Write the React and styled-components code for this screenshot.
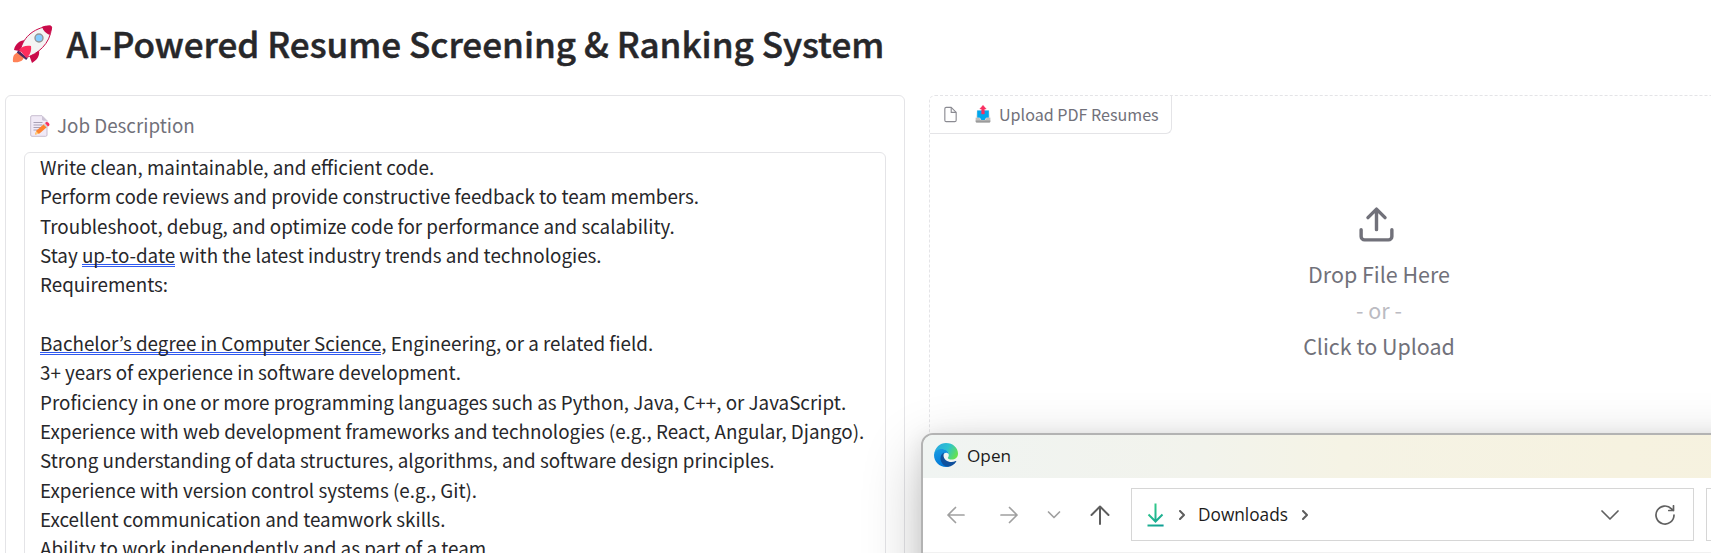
import React from "react";
import styled, { createGlobalStyle } from "styled-components";

const Global = createGlobalStyle`
  * { box-sizing: border-box; }
  html, body { margin: 0; background: #fff; overflow: hidden; }
  body { font-family: "Noto Sans CJK KR", "Noto Sans", sans-serif; color: #27272a; }
  svg { display: block; flex: none; }
`;

const Page = styled.main`
  position: relative;
  width: 1711px;
  height: 553px;
  overflow: hidden;
  padding-left: 5px;
`;
const Header = styled.h1`
  margin: 0;
  height: 95px;
  padding: 0 0 6px 6px;
  display: flex;
  align-items: center;
  gap: 13.5px;
  font-size: 35.05px;
  font-weight: 500;
  line-height: 56px;
  white-space: nowrap;
`;
const Title = styled.span`
  padding-bottom: 3px;
  -webkit-text-stroke: 0.5px #27272a;
`;
const Columns = styled.div`
  display: grid;
  grid-template-columns: 900px 900px;
  gap: 24px;
  height: 600px;
`;
const Panel = styled.section`
  border: 1px ${(p) => (p.$dashed ? "dashed" : "solid")} #e4e4e7;
  border-radius: 6px;
  min-width: 0;
`;
const JobPanel = styled(Panel)`
  display: flex;
  flex-direction: column;
  padding: 18px 18px 0;
`;
const FieldLabel = styled.div`
  display: flex;
  align-items: center;
  gap: 7px;
  height: 38px;
  padding: 0 0 15px 6px;
  font-size: 18.8px;
  line-height: 26px;
  color: #71717a;
`;
const LabelText = styled.span`
  padding-bottom: 2px;
`;
const TextField = styled.div`
  flex: 1;
  border: 1px solid #e4e4e7;
  border-radius: 6px;
  padding: 0 15px;
  font-size: 18.81px;
  line-height: 29.35px;
  white-space: pre;
`;
const Lines = styled.div`
  margin-top: -1px;
`;
const Line = styled.div`
  height: 29.35px;
`;
const Checked = styled.span`
  display: inline-block;
  height: 29.35px;
  vertical-align: top;
  background: linear-gradient(#2f59f0 1px, transparent 1px 2px, #2f59f0 2px 3px) 0 24px / 100% 3px no-repeat;
`;
const UploadTag = styled.div`
  display: flex;
  align-items: center;
  width: 242px;
  height: 38px;
  padding: 0 0 1px 12px;
  border: solid #e4e4e7;
  border-width: 0 1px 1px 0;
  border-radius: 0 0 6px 0;
  font-size: 16.1px;
  line-height: 24px;
  color: #71717a;
  white-space: nowrap;
`;
const TagEmoji = styled.span`
  margin: 0 8px 0 16px;
`;
const DropArea = styled.div`
  display: flex;
  flex-direction: column;
  align-items: center;
  padding-top: 70px;
  font-size: 21.45px;
  line-height: 36px;
  color: #71717a;
`;
const UploadMark = styled.div`
  margin: 0 6px 11px 0;
`;
const Or = styled.span`
  color: #bbbbc2;
`;
const Dialog = styled.div`
  position: absolute;
  left: 921px;
  top: 433px;
  width: 1000px;
  height: 400px;
  border: 2px solid #b3b3b3;
  border-radius: 12px;
  background: #fff;
  overflow: hidden;
  color: #1b1b1b;
  font-family: "Open Sans", "Noto Sans", sans-serif;
  box-shadow: 0 20px 60px rgba(0, 0, 0, 0.24), 0 2px 20px rgba(0, 0, 0, 0.08);
`;
const TitleBar = styled.div`
  display: flex;
  align-items: center;
  gap: 9px;
  height: 43px;
  padding: 0 0 3px 11px;
  font-size: 17.2px;
  background: linear-gradient(90deg, #f0f4f2 0, #f2f3ec 280px, #f5f3e5 420px, #f6f2e0 700px, #f6f1de 100%);
`;
const Toolbar = styled.div`
  display: flex;
  align-items: center;
  height: 75px;
  padding: 0 0 1px 23px;
  border-bottom: 1px solid #f1f1f1;
`;
const NavButtons = styled.div`
  display: flex;
  align-items: center;
  width: 185px;
`;
const NavButton = styled.span`
  color: ${(p) => (p.$active ? "#5d5d5d" : "#a0a0a0")};
  margin-right: ${(p) => p.$gap || 0}px;
`;
const AddressBar = styled.div`
  display: flex;
  align-items: center;
  width: 563px;
  height: 53px;
  padding: 0 18px 0 15px;
  border: 1px solid #d6d6d6;
  font-size: 17.25px;
  color: #1b1b1b;
`;
const CrumbArrow = styled.span`
  margin-left: ${(p) => (p.$first ? 15 : 0)}px;
  color: #5d5d5d;
`;
const Crumb = styled.span`
  margin: 0 14px 0 13px;
  padding-bottom: 1px;
`;
const BarActions = styled.div`
  display: flex;
  align-items: center;
  gap: 36px;
  margin-left: auto;
  color: #606060;
`;
const SearchBox = styled.div`
  width: 200px;
  height: 53px;
  margin-left: 12px;
  border: 1px solid #d6d6d6;
`;

const Rocket = () => (
  <svg width="42" height="42" viewBox="0 0 42 42">
    <path d="M3 31c3-4 10-3 10 1 0 5-5 7-11 6-.4-3 0-5 1-7z" fill="#ff8257" />
    <path d="M15 16c-6 0-11 4-12 10l10 2zM28 26c1 6-2 10-7 13l-4-11z" fill="#ca0b4a" />
    <path d="M9 28c2-13 12-24 30-26 1 0 2 1 1.500 2C39 20 27 30 14 34z" fill="#f4f4f4" stroke="#ca0b4a" />
    <path d="M31 2.800c3-1 6-1.500 8.500-1 1.600.4 1.500 2 1 4L38.500 11C35 9.500 32 6.500 31 2.800z" fill="#ca0b4a" />
    <path d="M6.500 27.500 16 35" stroke="#4c2a63" strokeWidth="2.500" />
    <path d="M8 25.500c3-3 7-4.500 12-3.500.7 5-1 9-4.500 12z" fill="#fc2d5d" />
    <circle cx="28" cy="14" r="4" fill="#83cbff" stroke="#949494" strokeWidth="1.400" />
  </svg>
);
const Memo = () => (
  <svg width="20" height="22" viewBox="0 0 20 22">
    <path d="M2 .7h10l5 5V20q0 1.300-1.300 1.300H2Q.7 21.300.7 20V2Q.7.7 2 .7z" fill="#f1eaf7" stroke="#c8bed0" />
    <path d="M12 .7v3.600Q12 5.700 13.500 5.700H17z" fill="#cdc4d6" />
    <path d="M3.500 7.500h9M3.500 10h9M3.500 12.500h9M3.500 15h5" stroke="#a9a1b5" />
    <path d="m5 19.500 1.500-4L14 9l3 3-7.500 6.500z" fill="#ff822d" />
    <path d="m5 19.700 1.200-3.500 2.500 2.500z" fill="#ffce7c" />
    <path d="m13.500 9.500 1.500-1.300 3 3-1.400 1.300z" fill="#d3d3d3" />
    <path d="m15 8 1-.8c1.500-1 4.500 1.800 3.200 3.200l-1.200 1z" fill="#f92f60" />
  </svg>
);
const Outbox = () => (
  <svg width="16" height="18" viewBox="0 0 16 18">
    <path d="M2 5h12l1.300 8v3H.7v-3z" fill="#e6e6e6" />
    <path d="M2.200 5.500h11.600v7.300H11L9.700 15H6.300L5 12.800H2.200z" fill="#00a6ed" />
    <path d="M.7 12.800h3.500L6 15.200h4l1.800-2.400h3.500v3.700q0 1-1 1H1.700q-1 0-1-1z" fill="#bebebe" />
    <path d="M.7 15.500h14.600v1q0 1-1 1H1.700q-1 0-1-1z" fill="#9b9b9b" />
    <path d="M8 .3 11.200 4H9.400v5H6.600V4H4.800z" fill="#f92f60" stroke="#f92f60" strokeWidth=".4" />
  </svg>
);
const FileIcon = () => (
  <svg width="17" height="17" viewBox="0 0 24 24" fill="none" stroke="#8b8b92" strokeWidth="1.600" strokeLinejoin="round">
    <path d="M13 2H6a2 2 0 0 0-2 2v16a2 2 0 0 0 2 2h12a2 2 0 0 0 2-2V9z" />
    <path d="M13 2v7h7" />
  </svg>
);
const UploadIcon = () => (
  <svg width="41" height="41" viewBox="0 0 24 24" fill="none" stroke="#71717a" strokeWidth="2" strokeLinecap="round" strokeLinejoin="round">
    <path d="M21 15v4a2 2 0 0 1-2 2H5a2 2 0 0 1-2-2v-4M17 8l-5-5-5 5M12 3v12" />
  </svg>
);
const EdgeLogo = () => (
  <svg width="24" height="24" viewBox="0 0 24 24">
    <defs>
      <linearGradient id="edgeTop" x1="0" y1="0.300" x2="1" y2="0.700">
        <stop offset="0" stopColor="#2aa9df" />
        <stop offset=".5" stopColor="#2cc3cf" />
        <stop offset="1" stopColor="#6be346" />
      </linearGradient>
      <linearGradient id="edgeLeft" x1="0" y1="0" x2="0.400" y2="1">
        <stop offset="0" stopColor="#1b9de2" />
        <stop offset="1" stopColor="#0078d8" />
      </linearGradient>
    </defs>
    <path d="M.2 11C1 4.500 6 0 12 0c7 0 12 5 12 10.500 0 4-3 6-6.300 6-2.500 0-3.900-.8-3.900-1.600 0-.7 1-1.200 1-3C14.800 8.500 11 6.500 8 6.500 4 6.500 1 9 .2 11z" fill="url(#edgeTop)" />
    <path d="M0 12c.2-3.700 3.500-6 7.500-6 4.200 0 7.300 2.700 7.300 5.500-.5-1.200-1.500-1.700-2.700-1.700-2.300 0-3.800 2.200-3.800 4.700 0 5 4.300 7.500 7.700 8.500-1.200.7-2.700 1-4 1C5.400 24 0 18.600 0 12z" fill="url(#edgeLeft)" />
    <path d="M10 9.600c-2.200 1-3.500 3.200-3.500 5.700 0 4.400 3.700 8.500 7.500 8.500 3.600-.5 6.700-2.600 8.300-5.300.3-.5-.1-.8-.6-.5-1.300.7-2.800 1-4.200 1-4.200 0-8-2.700-8-6.500 0-1.100.3-2.100.5-2.900z" fill="#0f509c" />
  </svg>
);
const Stroke = ({ w, h, d, sw = 1.7 }) => (
  <svg width={w} height={h} viewBox={`0 0 ${w} ${h}`} fill="none" stroke="currentColor" strokeWidth={sw} strokeLinecap="round" strokeLinejoin="round">
    <path d={d} />
  </svg>
);
const DownloadIcon = () => (
  <svg width="17" height="24" viewBox="0 0 17 24" fill="none" strokeWidth="2">
    <defs>
      <linearGradient id="down" x1="0" y1="0" x2="17" y2="24" gradientUnits="userSpaceOnUse">
        <stop offset="0" stopColor="#3bd487" />
        <stop offset="1" stopColor="#0b9b96" />
      </linearGradient>
    </defs>
    <path d="M8.500.5v17.500M1.500 11.500l7 7 7-7M.5 22.500h16.100" stroke="url(#down)" />
  </svg>
);

const jobLines = [
  { text: "Write clean, maintainable, and efficient code." },
  { text: "Perform code reviews and provide constructive feedback to team members." },
  { text: "Troubleshoot, debug, and optimize code for performance and scalability." },
  { lead: "Stay ", flagged: "up-to-date", text: " with the latest industry trends and technologies." },
  { text: "Requirements:" },
  { text: "" },
  { flagged: "Bachelor’s degree in Computer Science", text: ", Engineering, or a related field." },
  { text: "3+ years of experience in software development." },
  { text: "Proficiency in one or more programming languages such as Python, Java, C++, or JavaScript." },
  { text: "Experience with web development frameworks and technologies (e.g., React, Angular, Django)." },
  { text: "Strong understanding of data structures, algorithms, and software design principles." },
  { text: "Experience with version control systems (e.g., Git)." },
  { text: "Excellent communication and teamwork skills." },
  { text: "Ability to work independently and as part of a team." },
];

export default function App() {
  return (
    <Page>
      <Global />
      <Header>
        <Rocket />
        <Title>AI-Powered Resume Screening &amp; Ranking System</Title>
      </Header>
      <Columns>
        <JobPanel>
          <FieldLabel>
            <Memo />
            <LabelText>Job Description</LabelText>
          </FieldLabel>
          <TextField>
            <Lines>
              {jobLines.map(({ lead, flagged, text }, i) => (
                <Line key={i}>
                  {lead}
                  {flagged && <Checked>{flagged}</Checked>}
                  {text}
                </Line>
              ))}
            </Lines>
          </TextField>
        </JobPanel>
        <Panel $dashed>
          <UploadTag>
            <FileIcon />
            <TagEmoji><Outbox /></TagEmoji>
            <span>Upload PDF Resumes</span>
          </UploadTag>
          <DropArea>
            <UploadMark><UploadIcon /></UploadMark>
            <span>Drop File Here</span>
            <Or>- or -</Or>
            <span>Click to Upload</span>
          </DropArea>
        </Panel>
      </Columns>
      <Dialog>
        <TitleBar>
          <EdgeLogo />
          <span>Open</span>
        </TitleBar>
        <Toolbar>
          <NavButtons>
            <NavButton $gap={33}><Stroke w={20} h={20} d="M18 10H2M9.500 2.500 2 10l7.500 7.500" /></NavButton>
            <NavButton $gap={28}><Stroke w={20} h={20} d="M2 10h16M10.500 2.500 18 10l-7.500 7.500" /></NavButton>
            <NavButton $gap={29}><Stroke w={14} h={10} d="M1.500 2 7 7.500 12.500 2" /></NavButton>
            <NavButton $active><Stroke w={20} h={20} sw={2} d="M10 19V1.500M1.500 10 10 1.500l8.500 8.500" /></NavButton>
          </NavButtons>
          <AddressBar>
            <DownloadIcon />
            <CrumbArrow $first><Stroke w={6} h={10} sw={2} d="m1 1 4 4-4 4" /></CrumbArrow>
            <Crumb>Downloads</Crumb>
            <CrumbArrow><Stroke w={6} h={10} sw={2} d="m1 1 4 4-4 4" /></CrumbArrow>
            <BarActions>
              <Stroke w={18} h={10} d="m1 1 8 8 8-8" />
              <Stroke w={20} h={20} d="M19 10a9 9 0 1 1-2.500-6.200L18.500 5.500M18.500 .8v4.700h-4.700" />
            </BarActions>
          </AddressBar>
          <SearchBox />
        </Toolbar>
      </Dialog>
    </Page>
  );
}
